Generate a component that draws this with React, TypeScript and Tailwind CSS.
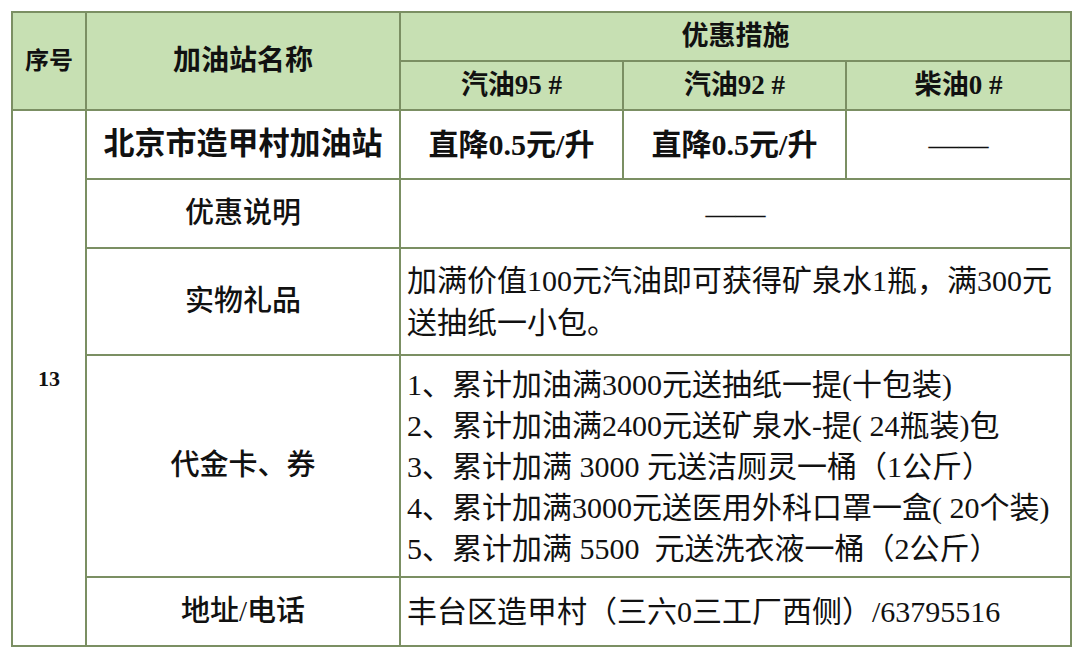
const font = { fontFamily: '"Liberation Serif", "Noto Sans CJK SC", serif' };

const cell = 'border-2 border-[#7b8f63] text-[#111] align-middle';
const head = `${cell} bg-[#c7e0b3] font-bold text-center`;
const label = `${cell} text-center text-[29px] font-medium`;

const vouchers = [
    '1、累计加油满3000元送抽纸一提(十包装)',
    '2、累计加油满2400元送矿泉水-提( 24瓶装)包',
    '3、累计加满 3000 元送洁厕灵一桶（1公斤）',
    '4、累计加满3000元送医用外科口罩一盒( 20个装)',
    '5、累计加满 5500  元送洗衣液一桶（2公斤）',
];

export default function App() {
    return (
        <div className="w-[1080px] h-[657px] bg-white pt-[11px] pl-[11px]" style={font}>
            <table className="border-collapse table-fixed w-[1059px]">
                <colgroup>
                    <col className="w-[74px]" />
                    <col className="w-[314px]" />
                    <col className="w-[223px]" />
                    <col className="w-[223px]" />
                    <col className="w-[225px]" />
                </colgroup>
                <tbody>
                    <tr className="h-[49px]">
                        <td rowSpan={2} className={`${head} text-[24px]`}>序号</td>
                        <td rowSpan={2} className={`${head} text-[28px]`}>加油站名称</td>
                        <td colSpan={3} className={`${head} text-[27px]`}>优惠措施</td>
                    </tr>
                    <tr className="h-[49px]">
                        <td className={`${head} text-[27px]`}>汽油95 #</td>
                        <td className={`${head} text-[27px]`}>汽油92 #</td>
                        <td className={`${head} text-[27px]`}>柴油0 #</td>
                    </tr>
                    <tr className="h-[69px]">
                        <td rowSpan={6} className={`${cell} text-center text-[22px] font-bold`}>13</td>
                        <td className={`${cell} text-center text-[31px] font-bold`}>北京市造甲村加油站</td>
                        <td className={`${cell} text-center text-[30px] font-bold`}>直降0.5元/升</td>
                        <td className={`${cell} text-center text-[30px] font-bold`}>直降0.5元/升</td>
                        <td className={`${cell} text-center text-[30px]`}>——</td>
                    </tr>
                    <tr className="h-[69px]">
                        <td className={label}>优惠说明</td>
                        <td colSpan={3} className={`${cell} text-center text-[30px]`}>——</td>
                    </tr>
                    <tr className="h-[107px]">
                        <td className={label}>实物礼品</td>
                        <td colSpan={3} className={`${cell} px-[6px] text-[30px] leading-[42px]`}>
                            加满价值100元汽油即可获得矿泉水1瓶，满300元
                            <br />
                            送抽纸一小包。
                        </td>
                    </tr>
                    <tr className="h-[222px]">
                        <td className={label}>代金卡、券</td>
                        <td colSpan={3} className={`${cell} px-[6px] text-[30px] leading-[41px]`}>
                            {vouchers.map((v) => (
                                <div key={v} className="whitespace-pre">{v}</div>
                            ))}
                        </td>
                    </tr>
                    <tr className="h-[69px]">
                        <td className={label}>地址/电话</td>
                        <td colSpan={3} className={`${cell} px-[6px] text-[30px]`}>
                            丰台区造甲村（三六0三工厂西侧）/63795516
                        </td>
                    </tr>
                </tbody>
            </table>
        </div>
    );
}
